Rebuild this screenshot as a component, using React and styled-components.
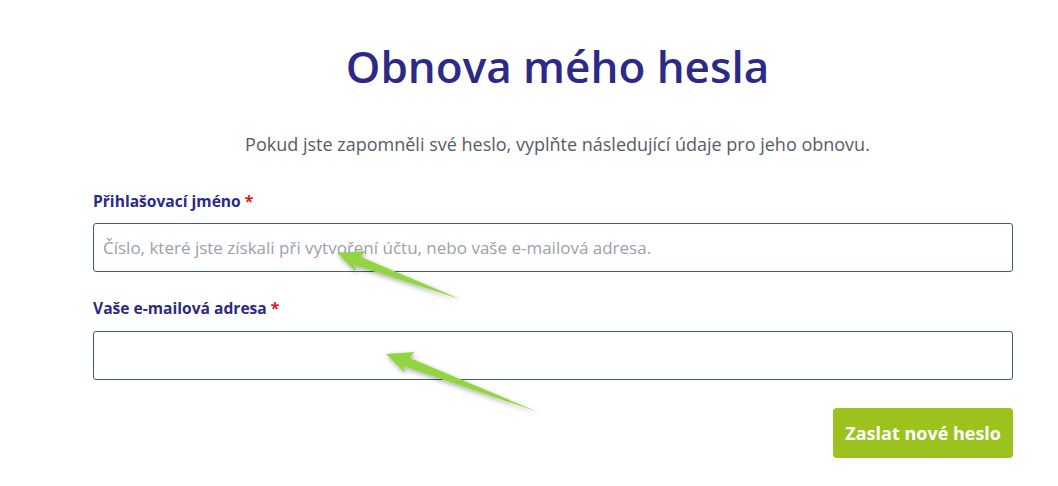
import React from 'react';
import styled, { createGlobalStyle } from 'styled-components';

const GlobalStyle = createGlobalStyle`
  html, body {
    margin: 0;
    padding: 0;
    background: #fff;
  }
  body {
    font-family: 'Open Sans', 'Noto Sans', sans-serif;
  }
`;

const Page = styled.div`
  position: relative;
  width: 1058px;
  height: 486px;
  overflow: hidden;
  background: #fff;
`;

const Form = styled.form`
  display: flex;
  flex-direction: column;
  width: 920px;
  margin-left: 93px;
  padding-top: 40px;
`;

const Header = styled.div`
  display: flex;
  flex-direction: column;
  align-items: center;
  padding-left: 9px;
`;

const Title = styled.h1`
  margin: 0;
  font-size: 44px;
  line-height: 1.2;
  font-weight: 600;
  color: #2c2a86;
`;

const Lead = styled.p`
  margin: 38px 0 0;
  font-size: 18px;
  line-height: 1.5;
  color: #555c66;
`;

const Field = styled.div`
  display: flex;
  flex-direction: column;
  gap: 10px;
  margin-top: ${({ $first }) => ($first ? '32px' : '25px')};
`;

const Label = styled.label`
  font-size: 15.6px;
  line-height: 1.5;
  font-weight: 700;
  color: #2c2a86;
`;

const Required = styled.span`
  color: #e3131b;
`;

const Input = styled.input`
  box-sizing: border-box;
  width: 100%;
  height: 49px;
  padding: 0 9px;
  border: 1px solid #3b6174;
  border-radius: 3px;
  font-family: inherit;
  font-size: 17px;
  color: #333;
  outline: none;

  &::placeholder {
    color: #9aa1aa;
  }
`;

const Actions = styled.div`
  display: flex;
  justify-content: flex-end;
  margin-top: 28px;
`;

const Submit = styled.button`
  height: 50px;
  padding: 0 12px;
  border: 0;
  border-radius: 4px;
  background: #9cc21e;
  color: #fff;
  font-family: inherit;
  font-size: 18px;
  font-weight: 700;
  cursor: pointer;
`;

const Annotations = styled.svg`
  position: absolute;
  left: 0;
  top: 0;
  pointer-events: none;
`;

const arrow = (x, y, tx, ty) => {
  // arrowhead pointing up-left, tapered shaft to (tx, ty)
  const pts = [
    [x, y],
    [x + 28, y - 2],
    [x + 24, y + 4],
    [tx, ty],
    [x + 17, y + 12],
    [x + 19, y + 19],
  ];
  return pts.map((p) => p.join(',')).join(' ');
};

export default function App() {
  return (
    <Page>
      <GlobalStyle />
      <Form onSubmit={(e) => e.preventDefault()}>
        <Header>
          <Title>Obnova mého hesla</Title>
          <Lead>
            Pokud jste zapomněli své heslo, vyplňte následující údaje pro jeho
            obnovu.
          </Lead>
        </Header>

        <Field $first>
          <Label htmlFor="login">
            Přihlašovací jméno <Required>*</Required>
          </Label>
          <Input
            id="login"
            placeholder="Číslo, které jste získali při vytvoření účtu, nebo vaše e-mailová adresa."
          />
        </Field>

        <Field>
          <Label htmlFor="email">
            Vaše e-mailová adresa <Required>*</Required>
          </Label>
          <Input id="email" type="email" />
        </Field>

        <Actions>
          <Submit type="submit">Zaslat nové heslo</Submit>
        </Actions>
      </Form>

      <Annotations width="1058" height="486" viewBox="0 0 1058 486">
        <defs>
          <filter id="shadow" x="-20%" y="-40%" width="140%" height="180%">
            <feDropShadow dx="1" dy="2" stdDeviation="2.5" floodColor="#000" floodOpacity="0.35" />
          </filter>
        </defs>
        <g fill="#92d443" filter="url(#shadow)">
          <polygon points={arrow(337, 253, 460, 299)} />
          <polygon points={arrow(386, 354, 538, 412)} />
        </g>
      </Annotations>
    </Page>
  );
}
